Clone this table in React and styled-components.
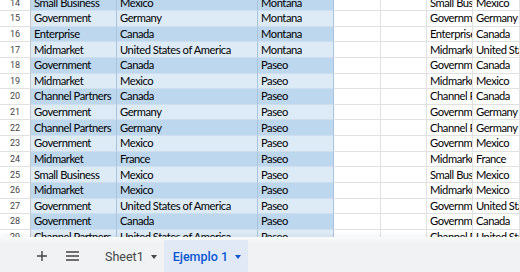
import React from 'react'
import styled, { createGlobalStyle } from 'styled-components'

const GlobalStyle = createGlobalStyle`
  html, body { margin: 0; padding: 0; background: #fff; }
  * { box-sizing: border-box; }
`

const rows = [
  [14, 'Small Business', 'Mexico', 'Montana'],
  [15, 'Government', 'Germany', 'Montana'],
  [16, 'Enterprise', 'Canada', 'Montana'],
  [17, 'Midmarket', 'United States of America', 'Montana'],
  [18, 'Government', 'Canada', 'Paseo'],
  [19, 'Midmarket', 'Mexico', 'Paseo'],
  [20, 'Channel Partners', 'Canada', 'Paseo'],
  [21, 'Government', 'Germany', 'Paseo'],
  [22, 'Channel Partners', 'Germany', 'Paseo'],
  [23, 'Government', 'Mexico', 'Paseo'],
  [24, 'Midmarket', 'France', 'Paseo'],
  [25, 'Small Business', 'Mexico', 'Paseo'],
  [26, 'Midmarket', 'Mexico', 'Paseo'],
  [27, 'Government', 'United States of America', 'Paseo'],
  [28, 'Government', 'Canada', 'Paseo'],
  [29, 'Channel Partners', 'United States of America', 'Paseo'],
]

const Page = styled.div`
  width: 520px;
  height: 272px;
  display: flex;
  flex-direction: column;
  overflow: hidden;
  background: #fff;
`

const Viewport = styled.div`
  height: 237px;
  overflow: hidden;
  flex: none;
`

const Sheet = styled.div`
  margin-top: -4.6px;
  display: grid;
  grid-template-columns: 31px 86px 141px 76px 47px 46px 46px 1fr;
  grid-auto-rows: 15.64px;
`

const RowHead = styled.div`
  display: flex;
  align-items: center;
  justify-content: center;
  font-family: Roboto, 'Liberation Sans', sans-serif;
  font-size: 9px;
  color: #444;
  border-right: 1px solid #c4c7c5;
  border-bottom: 1px solid #e1e1e1;
  background: #fff;
`

const Cell = styled.div`
  display: flex;
  align-items: center;
  padding: 0 0 1px 3px;
  font-family: Lato, 'Open Sans', sans-serif;
  font-size: 11.2px;
  letter-spacing: -0.45px;
  color: #000;
  white-space: nowrap;
  overflow: hidden;
  background: ${p => (p.$band === 'dark' ? '#bdd7ee' : p.$band === 'light' ? '#ddebf7' : '#fff')};
  border-right: 1px solid ${p => (p.$band ? '#a9c3dd' : '#e1e1e1')};
  border-bottom: 1px solid ${p => (p.$band ? '#cfdeee' : '#e1e1e1')};
`

const TabBar = styled.div`
  flex: 1;
  display: flex;
  align-items: center;
  padding: 3px 0 0 29px;
  background: linear-gradient(#fafbfb, #f0f2f4 6px);
  box-shadow: 0 -2px 4px rgba(0, 0, 0, 0.05);
  font-family: Roboto, 'Liberation Sans', sans-serif;
`

const IconButton = styled.div`
  width: 26px;
  height: 26px;
  margin-right: ${p => p.$gap || 4}px;
  display: flex;
  align-items: center;
  justify-content: center;
  color: #444;
`

const Tab = styled.div`
  height: 100%;
  display: flex;
  align-items: center;
  gap: 7px;
  padding: 0 7px 0 9px;
  font-size: 12.5px;
  font-weight: ${p => (p.$active ? 500 : 400)};
  color: ${p => (p.$active ? '#0b57d0' : '#444746')};
  background: ${p => (p.$active ? '#e1e9f7' : 'transparent')};
`

const Caret = styled.span`
  width: 0;
  height: 0;
  border-left: 3.5px solid transparent;
  border-right: 3.5px solid transparent;
  border-top: 4px solid currentColor;
  margin-top: 1px;
`

export default function App() {
  return (
    <Page>
      <GlobalStyle />
      <Viewport>
        <Sheet>
          {rows.map(([n, seg, country, product]) => {
            const band = n % 2 === 0 ? 'dark' : 'light'
            return (
              <React.Fragment key={n}>
                <RowHead>{n}</RowHead>
                <Cell $band={band}>{seg}</Cell>
                <Cell $band={band}>{country}</Cell>
                <Cell $band={band}>{product}</Cell>
                <Cell />
                <Cell />
                <Cell>{seg}</Cell>
                <Cell>{country}</Cell>
              </React.Fragment>
            )
          })}
          <RowHead>30</RowHead>
          <Cell $band="light" />
          <Cell $band="light" />
          <Cell $band="light" />
          <Cell />
          <Cell />
          <Cell />
          <Cell />
        </Sheet>
      </Viewport>
      <TabBar>
        <IconButton>
          <svg width="12" height="12" viewBox="0 0 12 12">
            <path d="M6 1v10M1 6h10" stroke="#444" strokeWidth="1.4" />
          </svg>
        </IconButton>
        <IconButton $gap={11}>
          <svg width="13" height="10" viewBox="0 0 13 10">
            <path d="M0 1h13M0 5h13M0 9h13" stroke="#444" strokeWidth="1.3" />
          </svg>
        </IconButton>
        <Tab>
          Sheet1
          <Caret />
        </Tab>
        <Tab $active>
          Ejemplo 1
          <Caret />
        </Tab>
      </TabBar>
    </Page>
  )
}
